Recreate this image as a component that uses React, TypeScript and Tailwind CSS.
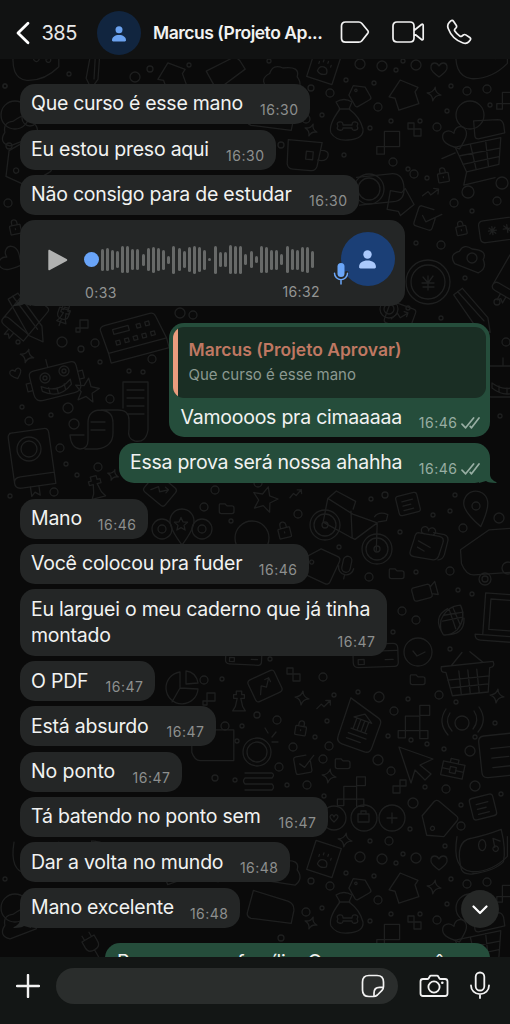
import { ReactNode } from "react";
import clsx from "clsx";

type Message = {
  text: string;
  time: string;
  width: string;
  spacing?: string;
};

const firstMessages: Message[] = [
  { text: "Que curso é esse mano", time: "16:30", width: "w-[290px]", spacing: "tracking-[-0.28px]" },
  { text: "Eu estou preso aqui", time: "16:30", width: "w-[256px]" },
  { text: "Não consigo para de estudar", time: "16:30", width: "w-[339px]" },
];

const lastMessages: Message[] = [
  { text: "O PDF", time: "16:47", width: "w-[135px]" },
  { text: "Está absurdo", time: "16:47", width: "w-[196px]" },
  { text: "No ponto", time: "16:47", width: "w-[162px]", spacing: "tracking-[-0.1px]" },
  { text: "Tá batendo no ponto sem", time: "16:47", width: "w-[308px]" },
  { text: "Dar a volta no mundo", time: "16:48", width: "w-[270px]" },
];

// heights in px
const waveform = [
  22, 23, 20, 17, 27, 27, 21, 21, 12, 23, 26, 23, 20, 8, 28, 23, 17, 25, 28, 25, 20,
  3, 28, 15, 15, 29, 28, 28, 11, 17, 7, 27, 26, 20, 20, 11, 27, 21, 20, 25, 26, 17,
];

const Person = ({ className }: { className: string }) => (
  <svg viewBox="0 0 16 18" className={className} fill="currentColor">
    <circle cx="8" cy="4.2" r="4" />
    <path d="M0 16.2c0-4 3.4-6.2 8-6.2s8 2.2 8 6.2c0 .9-.5 1.3-1.3 1.3H1.3C.5 17.5 0 17.1 0 16.2z" />
  </svg>
);

const Ticks = () => (
  <svg viewBox="0 0 19 12" className="ml-[3.5px] mb-[3px] h-3 w-[19px]" fill="none" stroke="currentColor" strokeWidth="1.7" strokeLinecap="round" strokeLinejoin="round">
    <path d="M1 7.2l3.6 3.6L12.6 1" />
    <path d="M9.2 9.4l1.3 1.4L18 1" />
  </svg>
);

const Tail = ({ out = false }: { out?: boolean }) => (
  <svg
    viewBox="0 0 18 16"
    className={clsx(
      "absolute bottom-0 h-4 w-[18px]",
      out ? "-right-[7px] -scale-x-100 text-[#254d3b]" : "-left-[7px] text-[#242626]"
    )}
    fill="currentColor"
  >
    <path d="M7 0v7c0 4-2.600 6.500-6.300 8-.6.300-.4.900.3.900C5 16 8.600 15.500 11 14l7 2V0z" />
  </svg>
);

const Time = ({ children, out = false }: { children: ReactNode; out?: boolean }) => (
  <div
    className={clsx(
      "flex shrink-0 items-end text-[14px] leading-[18px] tracking-[0.5px]",
      out ? "text-[#98aea3]" : "text-[#8d8f8e]"
    )}
  >
    {children}
    {out && <Ticks />}
  </div>
);

const Bubble = ({ message, tail = false, out = false }: { message: Message; tail?: boolean; out?: boolean }) => (
  <div
    className={clsx(
      "relative flex h-10 shrink-0 justify-between rounded-[15px] pl-[11px]",
      message.width,
      out ? "self-end bg-[#254d3b] pr-[10px]" : "bg-[#242626] pr-[11.5px]"
    )}
  >
    {tail && <Tail out={out} />}
    <span className={clsx("relative whitespace-nowrap pt-[6.400px] text-[19.5px] leading-[26px]", message.spacing ?? "tracking-[-0.23px]")}>
      {message.text}
    </span>
    <div className="relative flex items-end pb-[5px]">
      <Time out={out}>{message.time}</Time>
    </div>
  </div>
);

/* ---------- wallpaper doodles ---------- */

type DoodleProps = { x: number; y: number; r?: number; s?: number; d: string };

const Doodle = ({ x, y, r = 0, s = 1, d }: DoodleProps) => (
  <path d={d} transform={`translate(${x} ${y}) rotate(${r}) scale(${s})`} vectorEffect="non-scaling-stroke" />
);

const ring = (r: number, cx = 0, cy = 0) => `M${cx - r} ${cy}a${r} ${r} 0 1 0 ${2 * r} 0a${r} ${r} 0 1 0 ${-2 * r} 0z`;

const shapes = {
  sparkle: "M0-7Q1-1 7 0Q1 1 0 7Q-1 1-7 0Q-1-1 0-7z",
  star: "M0-12l3.500 8 8.500.8-6.500 5.700 2 8.500L0 6.500-7.500 11l2-8.500-6.500-5.700 8.500-.8z",
  heart: "M0 7C-5 3-9 0-8-4c1-4 6-4 8 0 2-4 7-4 8 0 1 4-3 7-8 11z",
  lock: "M-5-2h10q1 0 1 1v8q0 1-1 1H-5q-1 0-1-1v-8q0-1 1-1zM-3-2v-3a3 3 0 0 1 6 0v3M0 2v1",
  trend: "M-8 4l5-5 3 3 7-7M2-5h5v5",
  house: "M0-15l14 12-4 3v12H-10V0l-5-3z",
  check: "M8-2v10q0 3-3 3H-8q-3 0-3-3V-7q0-3 3-3H4M-5-1l5 5L13-8",
  cart: "M-24-4L24-14 22 14-12 22zM-38 8l14-6M-19 5l42-8M-16 14l38-8M-8-7l6 26M8-11l3 27M-12 22l-3 14L18 28",
  bag: "M-8-12L-12-19Q-4-24 4-19L1-12M-8-12Q-20 4-17 12-12 20 0 19 16 18 15 8 12-4 1-12zM-9-12h11M-9 1q4-1 4 3h9q0-4 4-3 3 1 1 4 2 3-1 4-4 1-4-2h-9q0 3-4 2-3-1-1-4-2-3 1-4",
  pencil: "M-24-16l9-8L16 6l4 16-16-4zM-20-20L12 10M-15-24L16 6M-24-16L4 18",
  robot: "M-19-14h38q5 0 5 5V9q0 8-8 8h-32q-8 0-8-8V-9q0-5 5-5zM-4-14v-8M-15 3q15 11 30 0v5q-15 12-30 0zM-8 6v6M0 8v6M8 6v6M-24-3h-5v8h5M24-3h5v8h-5",
  book: "M-20-28h36q5 0 5 5v42H-15q-7 0-7 6t7 6h36V19M-22 25v-48q0-5 5-5M-6 31v10l4-4 5 4V31",
  scroll: "M-2-8v-26h25v48q-2 13-13 11-8-2-6-12V4q0-10-11-10h-17q-13 0-13 13v17q0 9-8 9-9-1-10-14h14M-24-6q12 1 12 13v10q0 14-16 16h-12M2-26h17M2-18h17M2-10h17M2-2h17M-34 6h14M-34 14h14",
  typewriter: "M-26-18h46q4 0 5 4l5 24h-60l-2-24q0-4 6-4zM-30 10h60v10h-60zM-20-12h16v5h-16zM-20 0h4v4h-4zM-11 0h4v4h-4zM-2 0h4v4h-4zM7 0h4v4H7zM16 0h4v4h-4zM4-11h4v4H4zM13-11h4v4h-4z",
  bikeFrame: "M-27-1l3-24 26 14 25 7-21 18L1 12-27-1M3 12L0-14M27-4l1 28M-24-25l8-8 20 9-2 8M24-10q4-6 13-3l-1 6-8 2",
  tag: "M-16 0L-4-16H14q4 0 4 4v22q0 4-4 4H-6zM-9 0a2 2 0 1 0 4 0 2 2 0 1 0-4 0",
  camera: "M-12-7h16q3 0 3 3v10q0 3-3 3h-16q-3 0-3-3V-4q0-3 3-3zM7-3l7-5v16L7 5",
  corn: "M0-18Q12-10 10 6 6 16 0 18-6 16-10 6-12-10 0-18zM-10-8q-10 16 10 26Q20 8 10-8M-8-8l16 14M-6-12L10 0M8-8L-8 6M6-13L-10 0",
  basket: "M-26-8h52q2 6-4 6l-4 24h-36l-4-24q-6 0-4-6zM-16-8L-4-20M16-8L4-20M-21 6h42M-19 14h38M-9-2v24M0-2v24M9-2v24",
  laptop: "M-20-24h60v44h-60zM-14-18h54v32h-54zM-28 20h68v6h-62q-6 0-6-6z",
  truck: "M-26-8L4-26h30v44H-14q-8 0-12-12z",
  pin: "M0 18Q-12 2-12-6a12 12 0 0 1 24 0Q12 2 0 18z",
  card: "M-20-11h36q5 0 5 5V8q0 4-4 4h-36q-5 0-5-5V-7q0-4 4-4zM-24-4h44M-19 4h6v5h-6zM8 5h8",
  pie: "M-3 0v-16a16 16 0 1 0 18 17zM3-4v-13q10 1 12 12zM-3 0l-8 14",
  chart: "M-13-14h26q4 0 4 4v20q0 4-4 4h-26q-4 0-4-4v-20q0-4 4-4zM-9 7l5-9 5 4 7-9M3-7h5v5",
  bishop: "M-3-11h6v4h3v4h-4l2 9 3 5H-7l3-5 2-9h-4v-4h3z",
  pixels: "M-14-2h16v16h-16zM2-14H13V-3H2zM-22 14h8v8h-8zM2 14h9v9H2z",
  cubes: "M-8-8h16v16H-8zM-16 8h8v8h-8z",
  steps: "M-8-8h6v6h-6zM-2-2h7v7h-7z",
  cursor: "M-16-18L18-6 5 0 16 9l-6 6L0 5-4 18z",
  case: "M-11-6h22v14h-22zM-4-6v-4h8v4M-11 1h8M3 1h8M-3-2h6v6h-6z",
  note: "M-9-11H9q3 0 3 3V8q0 3-3 3H-9q-3 0-3-3V-8q0-3 3-3zM-6-4H6M-6 1H3M-6 6H5",
  backpack: "M-11-12h24q6 0 5 7l-2 14q-1 6-7 6h-20q-6 0-5-6l2-14q0-6 3-7zM6-15h12q6 1 5 8l-1 14q-1 6-6 7M-9-3l14 5M-9 4l8 3M-4-12a4 4 0 1 1 4-4 4 4 0 1 1 4 4",
  blob: "M-10-6h7l3 3h7q3 0 3 3v5q0 3-3 3H-8q-3 0-3-3v-8q0-3 1-3z",
  mug: "M-17-14h34l-3 24q-1 5-6 5h-18q-5 0-6-5zM16-6q9-1 8 5-1 6-10 5M2-4h7v8H2z",
  money: "M-22-14h34q12 0 12 14t-12 14h-34",
  cloud: "M-15 8q-8-8 2-13 3-9 12-5 16-2 13 8 6 8-2 14z",
  pinpad: "M-20-9h44v22h-44q-5 0-5-5V-4q0-5 5-5zM-16 2h8M-12-2v8M-1 2h8M3-2v8M-15-1l6 6M-9-1l-6 6M0-1l6 6",
  poster: "M-18-24L-17 14q0 6 6 6h22q6 0 6-6v-24q0-4-4-5zM-9-8l9-6 9 6zM-8 3H8M-6-7V3M-2-7V3M2-7V3M6-7V3M-9 8H9M-9 13H5",
  chat: "M-28 20q-6-34 14-36 16-2 36-8 4 24 0 38-10 10-38 12-10 0-12-6z",
  mic: "M-5-9a5 5 0 0 1 10 0V0A5 5 0 0 1-5 0zM-9-1a9 9 0 0 0 18 0M0 8v5",
  plug: "M-7-4h14v7q0 6-7 6t-7-6zM-4-4v-5M4-4v-5M0 9v9",
  wave: "M-30-16Q-36 20-14 23 8 24 26 6V-16M-6-6a4 6 0 1 0 0-1M10-2a3 3 0 1 0 0-1M12-4l-2-10 8 3",
  paw: "M-14-16h28v32h-28zM-5 7q0-6 5-6t5 6q-5 4-10 0zM-6-3v2M-2-6v2M3-6v2M7-3v2",
  frame: "M-24-12l40-2q8 0 10 8l2 14-44 10q-6 0-6-6z",
};

const doodles: [keyof typeof shapes, number, number, number?, number?][] = [
  ["robot", 55, 380, -14], ["star", 87, 390, 8], ["pencil", 28, 318, 10, 0.95], ["typewriter", 135, 336, -15],
  ["sparkle", 27, 356, 15], ["scroll", 125, 416, 0], ["book", 32, 457, -8, 0.95], ["bishop", 96, 487, -15],
  ["sparkle", 113, 475, 20, 0.8], ["bishop", 64, 315, 20, 0.7], ["cubes", 84, 324, 0, 0.5], ["heart", 16, 374, -20, 0.7],
  ["bikeFrame", 350, 525, 4], ["note", 408, 504, -14, 0.9], ["pin", 477, 509, -12], ["mic", 346, 568, 12, 0.85],
  ["backpack", 426, 545, 10, 0.9], ["camera", 425, 591, -15, 0.85], ["corn", 452, 620, 30, 0.95], ["truck", 487, 556, -4],
  ["laptop", 503, 617, 4, 0.95], ["basket", 468, 672, -6], ["card", 377, 655, -2], ["chart", 265, 686, -25, 0.85],
  ["steps", 295, 676, 0], ["blob", 397, 573, 0, 0.7], ["blob", 418, 679, 0, 0.7], ["lock", 284, 530, -14],
  ["star", 265, 499, 15, 1.05], ["trend", 296, 494, -5, 0.8], ["blob", 227, 508, 0, 0.7], ["pin", 182, 527, 0],
  ["star", 181, 524, 0, 0.55], ["tag", 318, 565, 25], ["chart", 160, 490, 40, 0.8], ["pie", 183, 688, 0],
  ["cubes", 211, 697, 0, 0.5], ["bishop", 239, 701, 0, 0.9], ["sparkle", 302, 698, 8], ["trend", 324, 705, 0, 0.9],
  ["lock", 301, 728, 10, 0.9], ["poster", 360, 728, 20, 1.05], ["pixels", 418, 718, 0, 0.9], ["cursor", 415, 765, 0],
  ["case", 453, 769, 12], ["check", 304, 764, -10, 0.85], ["sparkle", 329, 776, 10], ["blob", 343, 763, 0, 0.7],
  ["pixels", 355, 788, 0, 0.8], ["steps", 398, 788, 90], ["note", 483, 807, -14], ["tag", 437, 823, -50],
  ["sparkle", 345, 840, 10], ["chat", 484, 851, -4, 0.85], ["sparkle", 497, 696, 8], ["note", 503, 755, -6, 1.9],
  ["card", 245, 655, 3, 0.8], ["truck", 210, 748, 0, 0.7],
  ["trend", 431, 193, 8], ["lock", 443, 175, -10, 0.9], ["money", 380, 189, -6], ["house", 400, 202, 100, 0.95],
  ["check", 427, 218, 18], ["lock", 461, 228, -12, 0.85], ["pinpad", 504, 227, -8], ["cloud", 471, 259, 12],
  ["book", 515, 277, 30, 0.7], ["pencil", 474, 311, 5, 0.9], ["robot", 507, 380, 0], ["mug", 304, 155, 5],
  ["chart", 400, 316, 20, 0.8], ["heart", 12, 260, -60, 1.5], ["lock", 15, 227, -12, 0.9], ["plug", 64, 312, 20, 0.8],
  ["tag", 24, 166, -30, 1.3], ["book", 26, 315, 40, 0.7],
];

// the tile starts over after 793px, so this part is drawn twice
const repeated: [keyof typeof shapes, number, number, number?, number?][] = [
  ["wave", 38, 62, 0, 0.8], ["pencil", 94, 68, 50, 0.7], ["house", 173, 77, -20], ["frame", 225, 72, -24, 0.7],
  ["cloud", 284, 79, 0, 1.1], ["paw", 324, 66, 18, 0.95], ["heart", 439, 70, 0], ["wave", 484, 58, 0, 0.9],
  ["house", 405, 95, -18, 1.05], ["sparkle", 434, 94, 10], ["tag", 358, 94, 60, 0.6], ["bag", 348, 121, 0],
  ["sparkle", 311, 130, 20, 0.9], ["cubes", 392, 139, 0, 0.95], ["steps", 416, 131, 0], ["cart", 478, 151, 0, 0.95],
  ["heart", 456, 139, -20, 1.5], ["frame", 488, 128, 0, 0.6], ["cloud", 20, 130, -30, 1.1], ["plug", 90, 149, -30],
  ["frame", 270, 115, 20, 0.9], ["cubes", 508, 98, 0, 0.7],
];

const dots: [number, number, number][] = [
  [9, 146, 3], [5, 86, 2], [8, 203, 4], [95, 343, 4], [62, 342, 5], [81, 349, 3], [100, 362, 2], [68, 408, 5],
  [74, 424, 5], [110, 399, 4], [22, 407, 2], [29, 421, 4], [51, 415, 2], [60, 448, 4], [66, 464, 2], [77, 475, 2],
  [98, 467, 4], [54, 492, 4], [10, 496, 2], [129, 371, 2], [143, 372, 2], [152, 359, 4], [18, 342, 2], [29, 449, 8],
  [29, 449, 12], [45, 378, 5], [64, 371, 5], [45, 378, 2], [64, 371, 2], [371, 499, 2], [385, 495, 3], [298, 514, 4],
  [400, 532, 2], [339, 547, 2], [450, 511, 2], [463, 528, 4], [499, 518, 5], [433, 515, 2], [476, 506, 4], [455, 495, 2],
  [450, 571, 4], [416, 572, 2], [369, 577, 4], [458, 590, 2], [472, 594, 2], [402, 611, 4], [416, 620, 4], [393, 632, 2],
  [450, 649, 2], [325, 525, 15], [325, 525, 11], [325, 525, 3], [377, 549, 15], [377, 549, 11], [377, 549, 3],
  [418, 652, 14], [485, 579, 6], [485, 579, 3], [508, 568, 6], [379, 697, 5], [334, 695, 2], [323, 677, 4], [358, 692, 2],
  [394, 711, 4], [408, 699, 2], [439, 695, 4], [456, 702, 2], [270, 659, 2], [204, 680, 4], [222, 679, 2], [257, 715, 3],
  [277, 720, 4], [242, 726, 2], [225, 726, 4], [257, 752, 14], [257, 752, 10], [293, 747, 4], [329, 746, 4], [315, 737, 2],
  [327, 721, 2], [323, 759, 4], [237, 741, 2], [279, 767, 4], [307, 785, 4], [287, 785, 2], [388, 736, 2], [411, 740, 2],
  [427, 744, 2], [378, 760, 5], [391, 771, 4], [444, 749, 2], [470, 751, 5], [475, 737, 2], [495, 723, 2], [462, 723, 7],
  [446, 789, 4], [425, 787, 2], [475, 786, 5], [501, 794, 2], [413, 803, 5], [461, 826, 4], [461, 805, 2], [410, 829, 2],
  [389, 841, 4], [370, 841, 2], [215, 778, 3], [235, 780, 2], [334, 818, 12], [364, 818, 13], [392, 818, 13], [445, 846, 2],
  [205, 729, 4], [162, 529, 10], [202, 529, 10], [162, 529, 4], [202, 529, 4], [252, 538, 17], [324, 796, 2],
  [428, 282, 22], [428, 282, 17], [369, 189, 11], [369, 189, 15], [393, 162, 4], [414, 174, 4], [408, 169, 2], [427, 178, 2],
  [454, 203, 4], [472, 258, 5], [472, 211, 2], [497, 201, 4], [416, 243, 2], [441, 245, 4], [465, 278, 2], [389, 309, 9],
  [389, 309, 5], [408, 308, 2], [497, 302, 3], [441, 318, 2], [506, 342, 4], [500, 416, 2], [468, 192, 6], [502, 183, 6],
  [344, 155, 2], [180, 313, 5], [193, 315, 4], [215, 490, 4], [258, 483, 4], [231, 521, 2], [204, 507, 4],
];

const repeatedDots: [number, number, number][] = [
  [5, 86, 2], [69, 74, 2], [135, 77, 5], [150, 69, 3], [189, 65, 2], [269, 61, 2], [360, 64, 5], [382, 66, 5],
  [396, 70, 2], [416, 65, 5], [403, 61, 2], [346, 80, 2], [374, 83, 2], [311, 88, 3], [330, 93, 4], [378, 107, 4],
  [322, 115, 2], [391, 121, 2], [420, 121, 2], [451, 86, 2], [467, 91, 4], [487, 89, 4], [447, 111, 2], [470, 115, 14],
  [490, 105, 2], [370, 128, 2], [437, 127, 4], [281, 145, 3], [15, 115, 14], [30, 118, 8], [306, 119, 4],
];

const Wallpaper = () => (
  <svg viewBox="0 59 510 898" className="absolute inset-0 h-full w-full" fill="none" stroke="#1e1f1f" strokeWidth="1.3" strokeLinejoin="round" strokeLinecap="round">
    {doodles.map(([name, x, y, r, s], i) => (
      <Doodle key={i} x={x} y={y} r={r} s={s} d={shapes[name]} />
    ))}
    {dots.map(([x, y, r], i) => (
      <path key={i} d={ring(r, x, y)} />
    ))}
    {[0, 793].map((offset) => (
      <g key={offset} transform={`translate(0 ${offset})`}>
        {repeated.map(([name, x, y, r, s], i) => (
          <Doodle key={i} x={x} y={y} r={r} s={s} d={shapes[name]} />
        ))}
        {repeatedDots.map(([x, y, r], i) => (
          <path key={i} d={ring(r, x, y)} />
        ))}
      </g>
    ))}
    {/* lamp, coin and badge details */}
    <path d="M268 733l-3-5M272 737l4-5M272 742h6M245 773h27q3 2 0 5h-27q-3 3 0 6h27q3 3 0 6h-27" />
    <path d="M334 822q-6-5-3-7 2-1 3 2 1-3 3-2 3 2-3 7M358 814h11v8h-11zM361 814v-3h5v3M392 813v10M387 818h10" />
    <path d="M423 277l5 6 5-7M428 276v14M422 283h12M423 287h11M413 651l4 5 8-4" />
    <path d="M450 713q-6 9 2 18M446 709q-9 13 2 26M474 711q6 9-1 18M479 707q9 13-1 25" />
  </svg>
);

const Header = () => (
  <header className="flex h-[59px] shrink-0 items-start bg-[#111212]">
    <svg viewBox="0 0 14 24" className="ml-[15.500px] mt-[21px] h-6 w-[14px]" fill="none" stroke="#fff" strokeWidth="2.800" strokeLinecap="round" strokeLinejoin="round">
      <path d="M12 2.200L2 12l10 9.800" />
    </svg>
    <span className="ml-3 mt-[21px] w-[36.500px] text-[20px] leading-[25px] tracking-[-0.5px] text-[#e8e8e8]">385</span>
    <div className="ml-[19px] mt-[11px] flex h-11 w-11 items-center justify-center rounded-full bg-[#11253f] text-[#6ba2ef]">
      <Person className="mt-px h-4 w-[14px]" />
    </div>
    <h1 className="ml-3 mt-[21px] w-[176px] whitespace-nowrap text-[17.5px] font-semibold leading-6 tracking-[-0.48px]">Marcus (Projeto Ap...</h1>
    <svg viewBox="0 0 30 24" className="ml-[11px] mt-5 h-6 w-[30px]" fill="none" stroke="#f2f2f2" strokeWidth="1.700" strokeLinejoin="round">
      <path d="M5.500 2h13.200c1.300 0 2.400.5 3.200 1.500l6 7.200c.6.800.6 1.600 0 2.400l-6 7.600c-.8 1-1.900 1.500-3.200 1.500H5.500c-2.500 0-4-1.500-4-4V6c0-2.500 1.500-4 4-4z" />
    </svg>
    <svg viewBox="0 0 34 24" className="ml-[21px] mt-5 h-6 w-[34px]" fill="none" stroke="#f2f2f2" strokeWidth="1.700" strokeLinejoin="round">
      <path d="M6 2h13c2.500 0 4 1.500 4 4v12c0 2.500-1.500 4-4 4H6c-2.500 0-4-1.500-4-4V6c0-2.500 1.500-4 4-4zM23 10.500l7.500-6c.9-.7 1.700-.4 1.700.7v13.600c0 1.100-.8 1.400-1.700.7l-7.500-6" />
    </svg>
    <svg viewBox="0 0 26 26" className="ml-[21px] mt-[19px] h-[26px] w-[26px]" fill="none" stroke="#f2f2f2" strokeWidth="1.700" strokeLinejoin="round">
      <path d="M3.300 3.300l1.500-1.400c.9-.7 2-.6 2.700.3l2.700 4c.6.9.5 1.700-.1 2.500L8.800 10.300c-.4.600-.4 1.100 0 1.700 1.300 2 3.100 3.800 5.200 5.200.6.400 1.100.4 1.700 0l1.600-1.200c.8-.6 1.600-.7 2.500-.1l4 2.600c.9.700 1 1.800.3 2.700l-1.400 1.700c-1.500 1.700-3.700 1.700-6.200.8C9.800 21.400 4.700 16.200 2.200 9.500 1.300 7 1.600 4.900 3.300 3.300z" />
    </svg>
  </header>
);

const VoiceMessage = () => (
  <div className="relative mt-[5.300px] flex h-[86px] w-[385px] shrink-0 rounded-[15px] bg-[#242626]">
    <Tail />
    <svg viewBox="0 0 20 22" className="ml-7 mt-[28.500px] h-[22px] w-5" fill="#b0b1b0">
      <path d="M.3 1.800v18.400c0 1 .8 1.400 1.600.9l16.700-9.200c.9-.5.900-1.300 0-1.800L1.900.9C1.100.4.300.8.300 1.800z" />
    </svg>
    <div className="ml-4 w-[236px]">
      <div className="flex h-[79px] flex-col">
        <div className="mt-[25px] flex h-[30px] items-center">
          <span className="h-[15px] w-[15px] shrink-0 rounded-full bg-[#69a4f8]" />
          <div className="ml-[1.500px] flex w-[214px] items-center justify-between">
            {waveform.map((h, i) => (
              <span key={i} className="w-[3px] rounded-full bg-[#676968]" style={{ height: h }} />
            ))}
          </div>
        </div>
        <div className="mt-[8.500px] flex justify-between text-[14px] leading-[18px] tracking-[0.4px] text-[#939594]">
          <span className="mt-px pl-px">0:33</span>
          <span>16:32</span>
        </div>
      </div>
    </div>
    <div className="relative ml-[20.500px] mt-[12px] flex h-[54px] w-[54px] items-center justify-center rounded-full bg-[#1b3f76] text-[#abc9fb]">
      <Person className="h-[19px] w-[17px]" />
      <svg viewBox="0 0 18 26" className="absolute -left-[8.500px] top-[28.500px] h-[26px] w-[18px]" fill="none" strokeLinecap="round">
        <path d="M9 5v8M3.300 12a5.700 5.700 0 0 0 11.400 0M9 18v3" stroke="#242626" strokeWidth="4" />
        <rect x="5.500" y="2" width="7" height="14" rx="3.500" fill="#6ba6f8" />
        <path d="M2.500 12.200a6.500 6.500 0 0 0 13 0M9 18.700v4.300" stroke="#6ba6f8" strokeWidth="1.500" />
      </svg>
    </div>
  </div>
);

const QuotedMessage = () => (
  <div className="mt-[16.300px] flex h-[114.400px] w-[321px] shrink-0 flex-col self-end rounded-[15px] bg-[#254d3b] px-1 pt-1">
    <div className="flex h-[71px] shrink-0 overflow-hidden rounded-[11px] bg-[#1a2e24]">
      <div className="w-[5px] bg-[#eb9d7e]" />
      <div className="pl-[10.500px] pt-[11px]">
        <p className="whitespace-nowrap text-[17.500px] font-semibold leading-6 text-[#bf7862]">Marcus (Projeto Aprovar)</p>
        <p className="mt-[2px] whitespace-nowrap text-[15px] leading-[22px] text-[#8b9991]">Que curso é esse mano</p>
      </div>
    </div>
    <div className="flex flex-1 justify-between pl-[7.500px] pr-[6px]">
      <span className="whitespace-nowrap pt-[6px] text-[19.500px] leading-[26px] tracking-[-0.24px]">Vamoooos pra cimaaaaa</span>
      <div className="flex items-end pb-[5px]">
        <Time out>16:46</Time>
      </div>
    </div>
  </div>
);

const Footer = () => (
  <footer className="flex h-[67px] shrink-0 items-start bg-[#131615] pl-4 pt-[10.500px] text-[#f2f2f2]">
    <svg viewBox="0 0 24 24" className="mt-[6px] h-6 w-6" fill="none" stroke="currentColor" strokeWidth="2.400" strokeLinecap="round">
      <path d="M12 1v22M1 12h22" />
    </svg>
    <div className="ml-4 flex h-[36.500px] w-[342px] items-center justify-end rounded-full bg-[#2a2d2c] pr-[13px]">
      <svg viewBox="0 0 24 24" className="h-6 w-6" fill="none" stroke="currentColor" strokeWidth="1.700" strokeLinejoin="round">
        <path d="M12.500 22.500H8c-4 0-6.500-2.500-6.500-6.500V8c0-4 2.500-6.500 6.500-6.500h8c4 0 6.500 2.500 6.500 6.500v4.500c0 1.600-.4 2.700-1.500 3.900l-4.600 4.600c-1.200 1.100-2.300 1.500-3.900 1.500z" />
        <path d="M13 22.500V19c0-3.600 2-5.600 5.600-5.600h3.900" />
      </svg>
    </div>
    <svg viewBox="0 0 30 24" className="ml-[21px] mt-[6px] h-6 w-[30px]" fill="none" stroke="currentColor" strokeWidth="1.800" strokeLinejoin="round">
      <path d="M4 5h4.400c.6 0 1-.3 1.300-.8l1-1.700c.3-.6.700-.8 1.300-.8h6c.6 0 1 .2 1.300.8l1 1.700c.3.500.7.800 1.300.8H26c1.600 0 2.500.9 2.500 2.500v12c0 1.600-.9 2.500-2.500 2.500H4c-1.600 0-2.500-.9-2.500-2.500v-12C1.500 5.900 2.400 5 4 5z" />
      <circle cx="15" cy="13" r="5.600" />
      <circle cx="23.300" cy="8.700" r="1.300" fill="currentColor" stroke="none" />
    </svg>
    <svg viewBox="0 0 22 30" className="ml-5 mt-[2px] h-[30px] w-[22px]" fill="none" stroke="currentColor" strokeWidth="1.800" strokeLinecap="round">
      <rect x="6.700" y="2.500" width="8.600" height="18" rx="4.300" />
      <path d="M2 15.500c0 5 3.800 8.600 9 8.600s9-3.600 9-8.600M11 24.100V28" />
    </svg>
  </footer>
);

export default function App() {
  return (
    <div className="flex h-[1024px] w-[510px] flex-col overflow-hidden bg-[#0a0a0a] font-['Inter','Liberation_Sans',sans-serif] text-[#f1f2f1]">
      <Header />
      <main className="relative h-[898px] shrink-0 overflow-hidden bg-[#0a0a0a]">
        <Wallpaper />
        <div className="relative flex h-full flex-col pl-5 pr-5 pt-[25px]">
          <div className="flex flex-col gap-[5.500px]">
            {firstMessages.map((m) => (
              <Bubble key={m.text} message={m} />
            ))}
          </div>
          <VoiceMessage />
          <QuotedMessage />
          <div className="mt-[6px] flex shrink-0 flex-col">
            <Bubble message={{ text: "Essa prova será nossa ahahha", time: "16:46", width: "w-[371px]", spacing: "tracking-[-0.26px]" }} out tail />
          </div>
          <div className="mt-[15.800px] flex shrink-0 flex-col gap-[5.300px]">
            <Bubble message={{ text: "Mano", time: "16:46", width: "w-[128px]" }} />
            <Bubble message={{ text: "Você colocou pra fuder", time: "16:46", width: "w-[289px]" }} />
            <div className="flex h-[66.500px] w-[367px] justify-between rounded-[15px] bg-[#242626] pl-[11px] pr-[11.500px]">
              <p className="w-[300px] whitespace-nowrap pt-[6.400px] text-[19.500px] leading-[26px] tracking-[-0.23px]">
                Eu larguei o meu caderno que já tinha
                <br />
                montado
              </p>
              <div className="flex items-end pb-[5px]">
                <Time>16:47</Time>
              </div>
            </div>
            {lastMessages.map((m) => (
              <Bubble key={m.text} message={m} />
            ))}
            <Bubble message={{ text: "Mano excelente", time: "16:48", width: "w-[220px]" }} tail />
          </div>
          <div className="mt-[15px] h-10 w-[385px] shrink-0 self-end rounded-[15px] bg-[#254d3b] pl-3 pt-[6.500px]">
            <span className="whitespace-nowrap text-[19.500px] leading-[26px] tracking-[-0.1px]">Passo nossa família. O mano e você</span>
          </div>
        </div>
        <button className="absolute right-[11px] top-[831px] flex h-[38px] w-[38px] items-center justify-center rounded-full bg-[#262827]">
          <svg viewBox="0 0 16 10" className="mt-px h-[10px] w-4" fill="none" stroke="#fff" strokeWidth="2.200" strokeLinecap="round" strokeLinejoin="round">
            <path d="M1.500 1.500L8 8l6.500-6.500" />
          </svg>
        </button>
      </main>
      <Footer />
    </div>
  );
}
